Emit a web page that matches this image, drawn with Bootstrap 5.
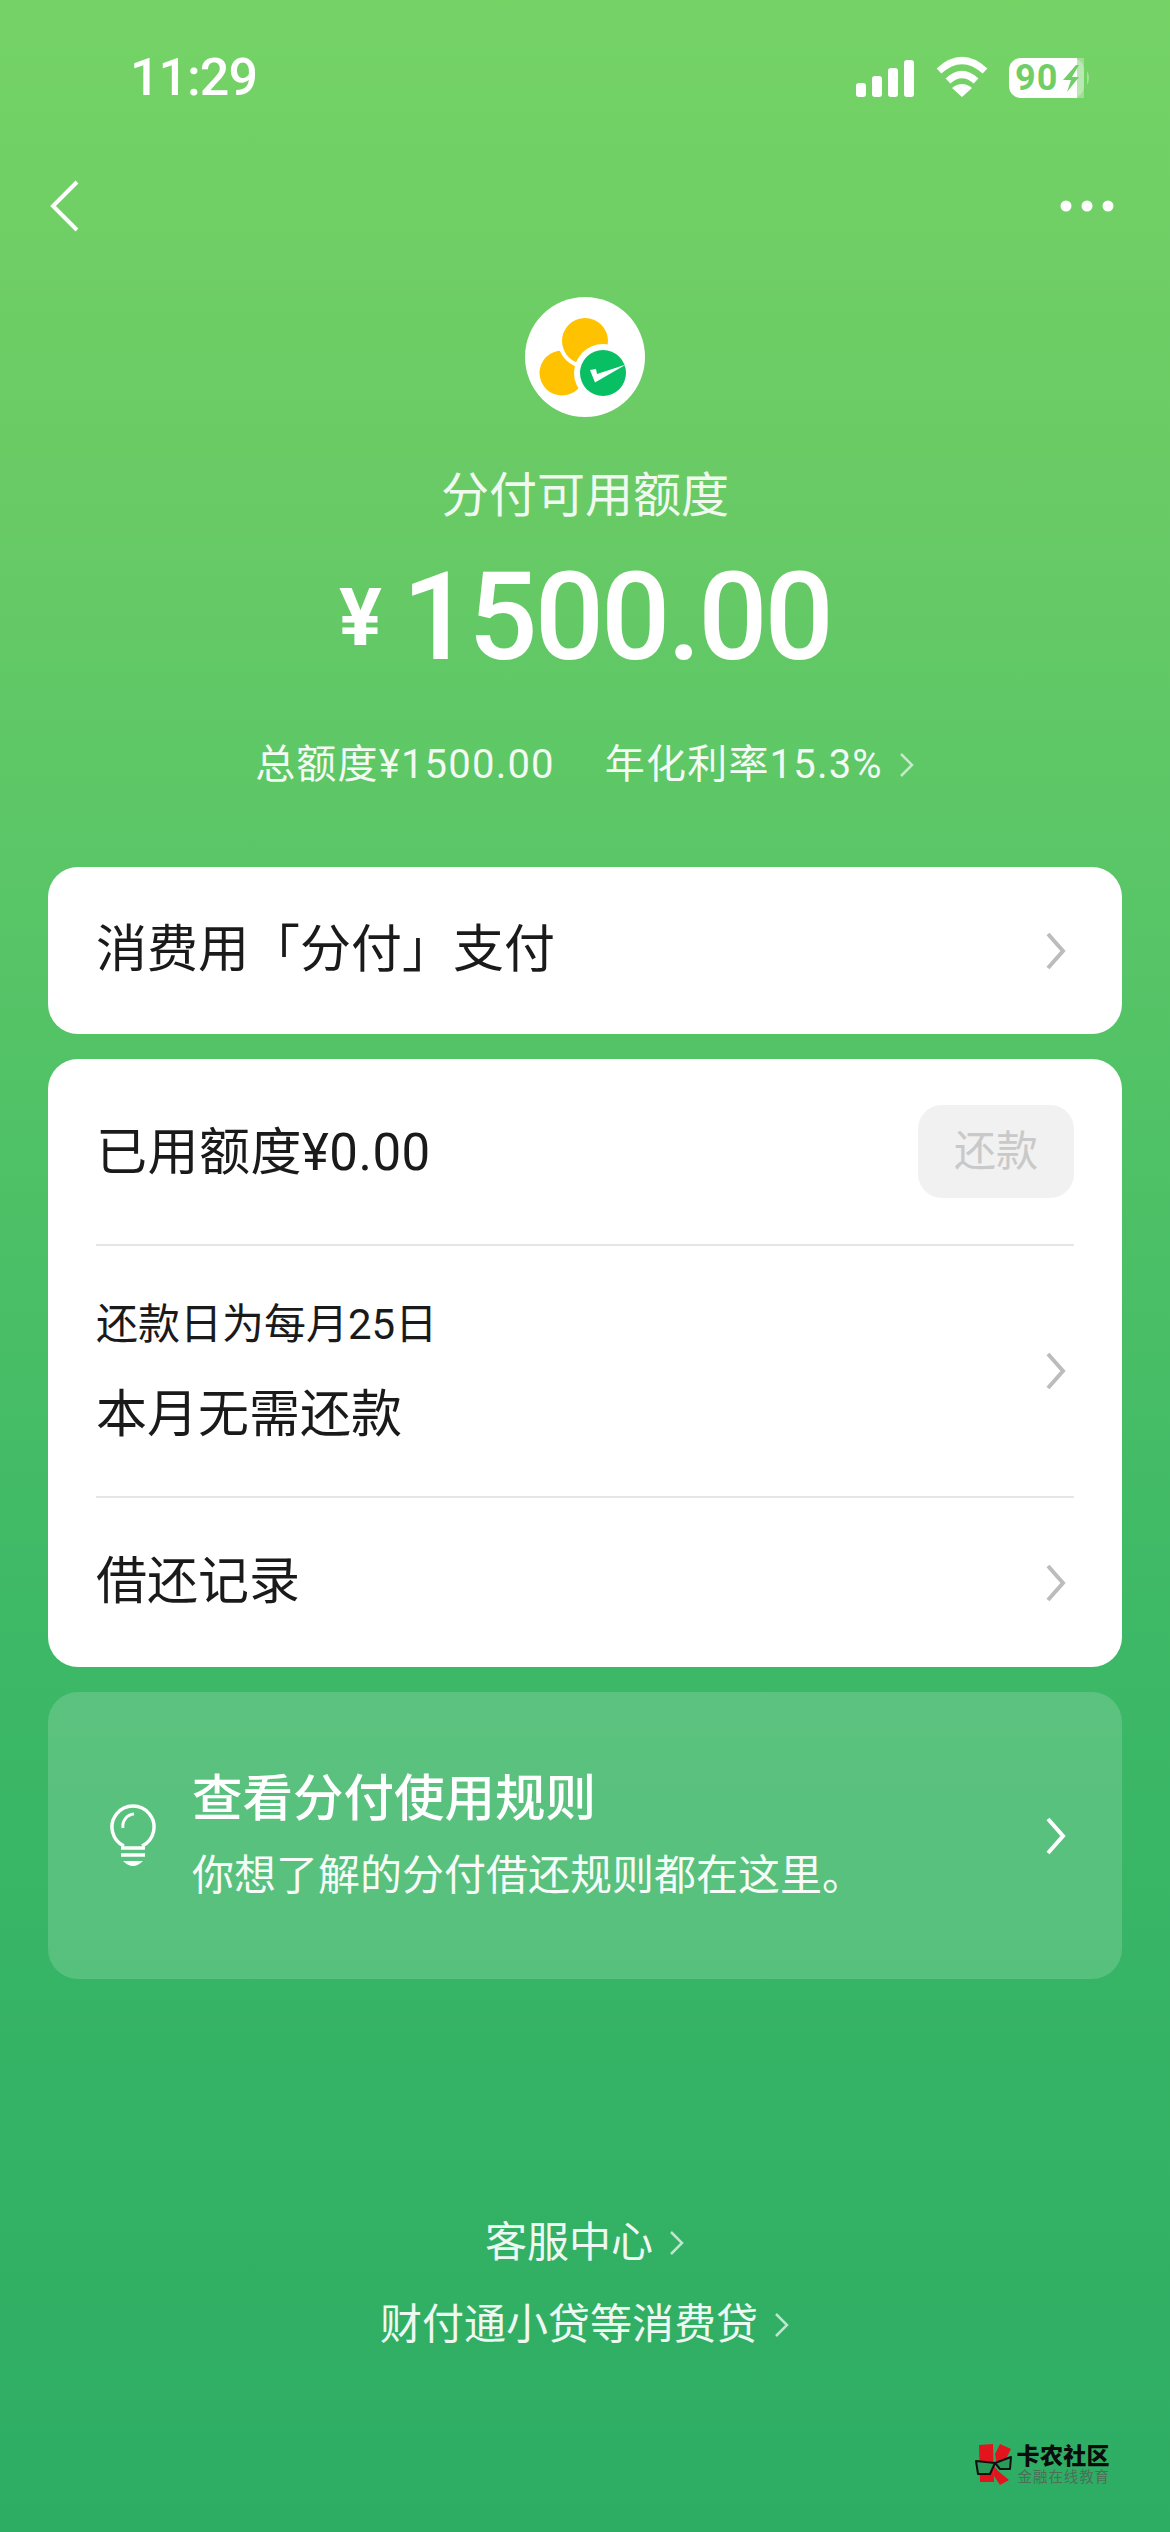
<!DOCTYPE html>
<html lang="zh-CN"><head><meta charset="utf-8">
<link href="https://cdn.jsdelivr.net/npm/bootstrap@5.3.0/dist/css/bootstrap.min.css" rel="stylesheet">
<script src="https://cdn.jsdelivr.net/npm/bootstrap@5.3.0/dist/js/bootstrap.bundle.min.js"></script>
<style>
html,body{margin:0;background:#2eae64}
.phone{width:1170px;height:2532px;overflow:hidden;background:linear-gradient(180deg,#75d366 0%,#6acb65 18%,#5ac667 34%,#3cb866 66%,#2dad64 100%);font-family:Roboto,"Noto Sans CJK SC",sans-serif;color:#fff}
.status-row{height:156px;padding:0 80px 0 130px}
.clock{font-size:52px;font-weight:500;line-height:1;letter-spacing:-1px}
.nav-row{height:100px;padding:0 56px 0 50px}
.logo-box{margin-top:41px;height:120px}
.quota-title{margin-top:49px;font-size:48px;line-height:60px;opacity:.9}
.amount{margin-top:27px;height:130px;line-height:130px;font-weight:500;gap:20px}
.amount-sign{font-size:80px;font-weight:700}
.amount-num{font-size:122px;letter-spacing:-3px}
.quota-sub{margin-top:57px;height:50px;font-size:40px;line-height:50px;gap:50px;opacity:.92;letter-spacing:1.2px}
.white-box{border:0;border-radius:30px;margin:0 48px;background:#fff;color:#1a1a1a}
.first-box{margin-top:77px;height:167px}
.second-box{margin-top:25px;height:608px}
.list-row{padding:0 48px;font-size:51px}
.row-a{height:186px}.row-b{height:252px}.row-c{height:170px}
.row-a span{letter-spacing:.5px;padding-top:3px}
.row-line{margin:0 48px;border-top:2px solid #e6e6e6}
.small-line{font-size:42px;line-height:56px;margin-bottom:32px}
.big-line{line-height:60px}
.go-mark{margin-right:6px}
.repay-btn{width:156px;height:93px;border-radius:24px;background:#f1f1f1;color:#c9c9c9;font-size:42px;border:0;padding:0}
.rule-box{margin:25px 48px 0;height:287px;border-radius:30px;background:rgba(255,255,255,.16);padding:0 48px 0 62px}
.rule-texts{margin-left:36px}
.rule-title{font-size:50.5px;line-height:62px;font-weight:500}
.rule-sub{font-size:42px;line-height:56px;margin-top:18px;opacity:.95}
.foot-one{margin-top:234px;font-size:42px;line-height:60px;gap:16px;opacity:.92}
.foot-two{margin-top:22px;font-size:42px;line-height:60px;gap:16px;opacity:.92}
.mark-row{margin-top:88px;padding-right:60px}
.mark-cn{font-size:23px;line-height:27px;font-weight:900;color:#0c0c0c;letter-spacing:.3px;margin-left:4px}
.mark-sub{font-size:14.5px;line-height:16px;color:#4c6f58;letter-spacing:.9px;margin-left:5px}
</style></head><body>
<main class="phone d-flex flex-column">
<div class="status-row d-flex justify-content-between align-items-center">
<span class="clock">11:29</span>
<svg width="240" height="45" viewBox="850 55 240 45">
<rect x="856" y="82" width="10" height="14" rx="3" fill="#fff"/><rect x="872" y="75" width="10" height="21" rx="3" fill="#fff"/><rect x="888" y="67" width="10" height="29" rx="3" fill="#fff"/><rect x="904" y="59" width="10" height="37" rx="3" fill="#fff"/>
<path d="M939 70Q962 49 985 70" fill="none" stroke="#fff" stroke-width="7"/><path d="M948 80Q962 67 976 80" fill="none" stroke="#fff" stroke-width="7"/><path d="M962 96 L952 87 Q962 79 972 87Z" fill="#fff"/>
<path d="M1021 57H1077V97H1021A12 12 0 0 1 1009 85V69A12 12 0 0 1 1021 57Z" fill="#fff"/>
<path d="M1077 57H1072A12 12 0 0 1 1084 69V85A12 12 0 0 1 1072 97H1077Z" fill="#fff" opacity=".3"/><rect x="1077" y="57" width="7" height="40" fill="#fff" opacity=".3"/>
<path d="M1087 70Q1091 77 1087 84Z" fill="#fff" opacity=".35"/>
<text x="1015" y="89" font-family="Roboto" font-weight="700" font-size="36" letter-spacing="1" fill="#6fce66">90</text>
<path d="M1076 64L1063 79H1071L1067 91L1079 76H1072L1079 64Z" fill="#6fce66"/>
</svg>
</div>
<div class="nav-row d-flex justify-content-between align-items-center">
<svg width="30" height="52" viewBox="0 0 30 52"><path d="M27 2L3 26L27 50" fill="none" stroke="#fff" stroke-width="4"/></svg>
<svg width="54" height="12" viewBox="0 0 54 12"><circle cx="6" cy="6" r="5.5" fill="#fff"/><circle cx="27" cy="6" r="5.5" fill="#fff"/><circle cx="48" cy="6" r="5.5" fill="#fff"/></svg>
</div>
<div class="logo-box d-flex justify-content-center">
<svg width="120" height="120" viewBox="0 0 120 120"><circle cx="60" cy="60" r="60" fill="#fff"/><circle cx="37" cy="76" r="22.5" fill="#ffc200"/><circle cx="60" cy="44" r="27" fill="#fff"/><circle cx="60" cy="44" r="23" fill="#ffc200"/><circle cx="78" cy="76" r="29" fill="#fff"/><circle cx="78" cy="76" r="23" fill="#08bf63"/><path d="M65 73L70 85.5L101 67.5L72 77L71 72Z" fill="#fff"/></svg>
</div>
<div class="quota-title text-center">分付可用额度</div>
<div class="amount d-flex justify-content-center align-items-center"><span class="amount-sign">¥</span><span class="amount-num">1500.00</span></div>
<div class="quota-sub d-flex justify-content-center align-items-center"><span>总额度¥1500.00</span><span class="d-flex align-items-center gap-3">年化利率15.3%<svg width="16" height="26" viewBox="0 0 16 26"><path d="M2 2L13 13L2 24" fill="none" stroke="#fff" stroke-opacity=".7" stroke-width="2.5"/></svg></span></div>
<section class="card white-box first-box"><div class="list-row h-100 d-flex justify-content-between align-items-center"><span>消费用「分付」支付</span><svg class="go-mark" width="24" height="40" viewBox="0 0 24 40"><path d="M4 3L19 20L4 37" fill="none" stroke="#bcbcbc" stroke-width="4"/></svg></div></section>
<section class="card white-box second-box">
<div class="list-row row-a d-flex justify-content-between align-items-center"><span>已用额度¥0.00</span><button class="repay-btn" type="button">还款</button></div>
<div class="row-line"></div>
<div class="list-row row-b d-flex justify-content-between align-items-center"><div><div class="small-line">还款日为每月25日</div><div class="big-line">本月无需还款</div></div><svg class="go-mark" width="24" height="40" viewBox="0 0 24 40"><path d="M4 3L19 20L4 37" fill="none" stroke="#bcbcbc" stroke-width="4"/></svg></div>
<div class="row-line"></div>
<div class="list-row row-c d-flex justify-content-between align-items-center"><span>借还记录</span><svg class="go-mark" width="24" height="40" viewBox="0 0 24 40"><path d="M4 3L19 20L4 37" fill="none" stroke="#bcbcbc" stroke-width="4"/></svg></div>
</section>
<section class="rule-box d-flex align-items-center">
<svg width="46" height="64" viewBox="0 0 46 64"><path d="M14 42A21 21 0 1 1 32 42" fill="none" stroke="#fff" stroke-width="3.5"/><path d="M13 24A12 12 0 0 1 24 10" fill="none" stroke="#fff" stroke-width="3"/><path d="M11 44H35M11 51H35" stroke="#fff" stroke-width="3.5"/><path d="M13 57H33Q28 62 23 62Q18 62 13 57Z" fill="#fff"/></svg>
<div class="rule-texts flex-grow-1"><div class="rule-title">查看分付使用规则</div><div class="rule-sub">你想了解的分付借还规则都在这里。</div></div>
<svg class="go-mark" width="24" height="40" viewBox="0 0 24 40"><path d="M4 3L19 20L4 37" fill="none" stroke="#fff" stroke-width="4"/></svg>
</section>
<div class="foot-one d-flex justify-content-center align-items-center"><span>客服中心</span><svg width="16" height="26" viewBox="0 0 16 26"><path d="M2 2L13 13L2 24" fill="none" stroke="#fff" stroke-opacity=".75" stroke-width="2.5"/></svg></div>
<div class="foot-two d-flex justify-content-center align-items-center"><span>财付通小贷等消费贷</span><svg width="16" height="26" viewBox="0 0 16 26"><path d="M2 2L13 13L2 24" fill="none" stroke="#fff" stroke-opacity=".75" stroke-width="2.5"/></svg></div>
<div class="mark-row d-flex justify-content-end align-items-center">
<svg width="40" height="42" viewBox="0 0 40 42"><path d="M6 1L20 0L21 38H7Z" fill="#e2141e"/><path d="M22 10L27 0L38 5L32 17L24 22Z" fill="#e2141e"/><path d="M21 22L25 27L36 36L27 41L21 32Z" fill="#e2141e"/><path d="M3 17L22 19L17 30H5Z" fill="#2a9a58" stroke="#111" stroke-width="2" stroke-linejoin="round"/><path d="M22 19L38 13L37 25H27Z" fill="#2a9a58" stroke="#111" stroke-width="2" stroke-linejoin="round"/></svg>
<div><div class="mark-cn">卡农社区</div><div class="mark-sub">金融在线教育</div></div>
</div>
</main>
</body></html>
